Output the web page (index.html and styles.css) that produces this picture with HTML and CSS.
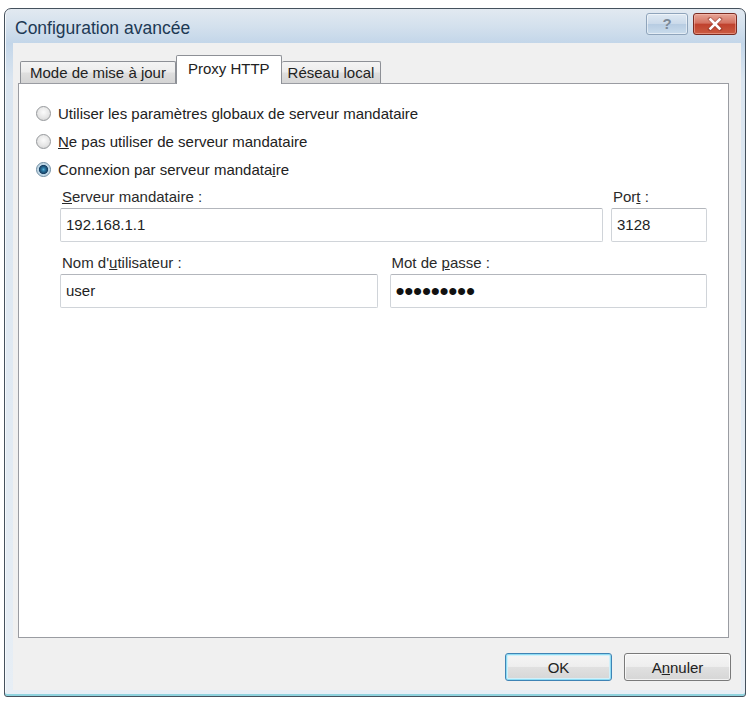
FILE: index.html
```html
<!DOCTYPE html>
<html lang="fr">
<head>
<meta charset="utf-8">
<title>Configuration avancée</title>
<link rel="stylesheet" href="styles.css">
</head>
<body>
<div class="window">
  <div class="titlebar">
    <span class="title">Configuration avancée</span>
    <div class="caption">
      <div class="cbtn help"><span class="qmark">?</span></div>
      <div class="cbtn close">
        <svg width="16" height="14" viewBox="0 0 16 14">
          <path d="M3 2 L13 12 M13 2 L3 12" stroke="#7a2a20" stroke-width="4" stroke-linecap="square" opacity="0.45"/>
          <path d="M3.5 2.5 L12.5 11.5 M12.5 2.5 L3.5 11.5" stroke="#ffffff" stroke-width="2.6" stroke-linecap="square"/>
        </svg>
      </div>
    </div>
  </div>
  <div class="client">
    <div class="tabs">
      <div class="tab">Mode de mise à jour</div>
      <div class="tab active">Proxy HTTP</div>
      <div class="tab">Réseau local</div>
    </div>
    <div class="panel">
      <div class="radio-row"><span class="radio"></span><span>Utiliser les paramètres <u>g</u>lobaux de serveur mandataire</span></div>
      <div class="radio-row"><span class="radio"></span><span><u>N</u>e pas utiliser de serveur mandataire</span></div>
      <div class="radio-row"><span class="radio checked"></span><span>Connexion par serveur mandata<u>i</u>re</span></div>
      <div class="fields">
        <div class="frow one">
          <div class="field">
            <div class="flabel"><u>S</u>erveur mandataire :</div>
            <div class="input">192.168.1.1</div>
          </div>
          <div class="field">
            <div class="flabel">Por<u>t</u> :</div>
            <div class="input">3128</div>
          </div>
        </div>
        <div class="frow two">
          <div class="field">
            <div class="flabel">Nom d'<u>u</u>tilisateur :</div>
            <div class="input">user</div>
          </div>
          <div class="field">
            <div class="flabel">Mot de <u>p</u>asse :</div>
            <div class="input pwd">•••••••••</div>
          </div>
        </div>
      </div>
    </div>
    <div class="footer">
      <button class="btn default">OK</button>
      <button class="btn">A<u>n</u>nuler</button>
    </div>
  </div>
</div>
</body>
</html>
```
FILE: styles.css
```css
body {
  margin: 0;
  background: #ffffff;
  font-family: "Liberation Sans", Arial, sans-serif;
  font-size: 15px;
  color: #1e1e1e;
}

.window {
  margin: 8px 0 0 4px;
  width: 742px;
  height: 689px;
  box-sizing: border-box;
  border: 1px solid #45515d;
  border-radius: 7px 7px 3px 3px;
  background: linear-gradient(to bottom, #e2e9f1 0px, #d3e0ed 18px, #c3d6e9 34px, #dae5f0 70px, #e7eef5 100%);
  padding: 0 4px 6px 8px;
  display: flex;
  flex-direction: column;
  box-shadow: inset 0 -2px 0 #8fd3de, inset 1px 0 0 #f6f9fc;
}

.titlebar {
  height: 34px;
  display: flex;
  align-items: flex-start;
  flex-shrink: 0;
}

.title {
  padding: 9px 0 0 2px;
  font-size: 17.5px;
  line-height: 20px;
  color: #1d3954;
}

.caption {
  margin-left: auto;
  margin-top: 4px;
  margin-right: 4px;
  display: flex;
  gap: 5px;
}

.cbtn {
  height: 22px;
  box-sizing: border-box;
  border-radius: 3px;
  display: flex;
  align-items: center;
  justify-content: center;
}

.help {
  width: 42px;
  border: 1px solid #8fa4bb;
  background: linear-gradient(to bottom, #dfe9f3, #cbdaea 48%, #b7cce2 52%, #cadcec);
  box-shadow: inset 0 0 0 1px rgba(255, 255, 255, 0.5);
}

.qmark {
  font-family: "Liberation Sans", Arial, sans-serif;
  font-weight: bold;
  font-size: 15px;
  line-height: 16px;
  color: #7d8a98;
}

.close {
  width: 44px;
  border: 1px solid #7b2c22;
  background: linear-gradient(to bottom, #e6a596, #d47362 45%, #c0422e 52%, #cb5c41);
  box-shadow: inset 0 0 0 1px rgba(255, 200, 190, 0.45);
}

.client {
  flex: 1;
  background: #f0f0f0;
  display: flex;
  flex-direction: column;
  padding: 12px 0 9px 5px;
}

.tabs {
  display: flex;
  align-items: flex-end;
  height: 28px;
  padding-left: 2px;
  flex-shrink: 0;
}

.tab {
  height: 22px;
  line-height: 21px;
  box-sizing: border-box;
  border: 1px solid #8d9096;
  border-bottom: none;
  border-radius: 2px 2px 0 0;
  background: linear-gradient(to bottom, #f4f4f4, #ececec 48%, #dfdfdf 52%, #d4d4d4);
  padding: 0 9px;
  color: #222;
  white-space: nowrap;
}

.tab + .tab {
  border-left: none;
}

.tab.active {
  height: 29px;
  margin-bottom: -1px;
  padding: 4px 11px 0;
  line-height: 18px;
  background: #ffffff;
  border-left: 1px solid #8d9096;
  position: relative;
  z-index: 1;
}

.tab.active + .tab {
  padding: 0 6px;
}

.panel {
  flex: 1;
  margin-right: 12px;
  background: #ffffff;
  border: 1px solid #9a9ca2;
  padding: 15px 21px 0 17px;
}

.radio-row {
  display: flex;
  align-items: center;
  height: 28px;
  gap: 7px;
  color: #222;
}

.radio {
  width: 15px;
  height: 15px;
  box-sizing: border-box;
  border-radius: 50%;
  border: 1px solid #95989b;
  background: radial-gradient(circle at 50% 40%, #fbfbfb 0, #e6e6e6 55%, #cdcdcd 100%);
  flex-shrink: 0;
}

.radio.checked {
  border-color: #6b8aa0;
  background: radial-gradient(circle at 50% 50%, #5fb3d6 0, #2b7aa6 1.6px, #173f63 4.2px, #b9d3e3 5px, #eef4f8 100%);
}

.fields {
  margin: 5px 0 0 24px;
}

.frow {
  display: grid;
  grid-template-columns: 1fr 96px;
  gap: 8px;
}

.frow.two {
  grid-template-columns: 1fr 1fr;
  gap: 12px;
  margin-top: 12px;
}

.flabel {
  height: 18px;
  line-height: 18px;
  margin: 0 0 2px 2px;
  color: #2a2a2a;
}

.input {
  height: 34px;
  box-sizing: border-box;
  border: 1px solid #d0d4d9;
  border-top-color: #b3b6bc;
  border-radius: 2px;
  padding: 0 5px;
  line-height: 32px;
  background: #ffffff;
  color: #1e1e1e;
}

.input.pwd {
  font-size: 26px;
  letter-spacing: -0.3px;
  color: #111;
}

.footer {
  display: flex;
  justify-content: flex-end;
  gap: 12px;
  margin-top: 15px;
  padding-right: 10px;
  flex-shrink: 0;
}

.btn {
  width: 107px;
  height: 28px;
  box-sizing: border-box;
  border: 1px solid #7a7a7a;
  border-radius: 3px;
  background: linear-gradient(to bottom, #f5f5f5, #eeeeee 48%, #e0e0e0 52%, #d6d6d6);
  box-shadow: inset 0 0 0 1px rgba(255, 255, 255, 0.7);
  font-family: "Liberation Sans", Arial, sans-serif;
  font-size: 15px;
  color: #222;
  padding: 0;
}

.btn.default {
  border-color: #3f84b5;
  box-shadow: inset 0 0 0 1px #8fdcf3, inset 0 0 0 2px #d2f0fa;
}
```
